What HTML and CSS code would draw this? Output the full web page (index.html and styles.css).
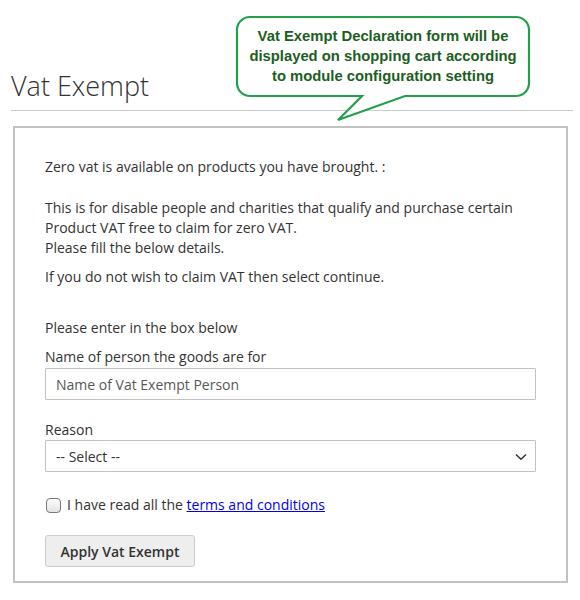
FILE: index.html
```html
<!DOCTYPE html>
<html lang="en">
<head>
<meta charset="utf-8">
<title>Vat Exempt</title>
<link rel="stylesheet" href="styles.css">
</head>
<body>
<div class="page">
  <h1 class="page-title">Vat Exempt</h1>

  <div class="callout">
    <svg class="callout-shape" width="310" height="120" viewBox="0 0 310 120" aria-hidden="true">
      <path d="M21,8 H287 A13,13 0 0 1 300,21 V74 A13,13 0 0 1 287,87 H176 L109,111 L133,87 H21 A13,13 0 0 1 8,74 V21 A13,13 0 0 1 21,8 Z" fill="#ffffff" stroke="#23a04c" stroke-width="2.2" stroke-linejoin="miter"/>
    </svg>
    <div class="callout-text">Vat Exempt Declaration form will be<br>displayed on shopping cart according<br>to module configuration setting</div>
  </div>

  <form class="vat-box">
    <p class="intro">Zero vat is available on products you have brought. :</p>
    <p class="details">This is for disable people and charities that qualify and purchase certain<br>Product VAT free to claim for zero VAT.<br>Please fill the below details.</p>
    <p class="note">If you do not wish to claim VAT then select continue.</p>
    <p class="enter">Please enter in the box below</p>

    <label class="field-label" for="person">Name of person the goods are for</label>
    <input class="text-input" id="person" type="text" placeholder="Name of Vat Exempt Person">

    <label class="field-label reason-label" for="reason">Reason</label>
    <div class="select-wrap">
      <select class="select-input" id="reason">
        <option>-- Select --</option>
      </select>
      <svg class="select-arrow" width="12" height="8" viewBox="0 0 12 8" aria-hidden="true">
        <path d="M1,1.5 L6,6.2 L11,1.5" fill="none" stroke="#333" stroke-width="1.5"/>
      </svg>
    </div>

    <div class="terms-row">
      <input class="checkbox" type="checkbox" id="terms">
      <label for="terms">I have read all the <a href="#" class="terms-link">terms and conditions</a></label>
    </div>

    <button type="button" class="apply-btn">Apply Vat Exempt</button>
  </form>
</div>
</body>
</html>
```

FILE: styles.css
```css
html, body {
  margin: 0;
  padding: 0;
  background: #ffffff;
}

body {
  font-family: "Open Sans", "Liberation Sans", sans-serif;
  font-size: 14px;
  line-height: 20px;
  color: #333333;
}

.page {
  position: relative;
  padding: 0 7px 0 11px;
}

.page-title {
  margin: 0;
  padding: 70px 0 8px 0;
  font-size: 27px;
  font-weight: 300;
  line-height: 32px;
  color: #333333;
  border-bottom: 1px solid #cccccc;
}

.callout {
  position: absolute;
  left: 229px;
  top: 9px;
  width: 310px;
  height: 120px;
}

.callout-shape {
  position: absolute;
  left: 0;
  top: 0;
  display: block;
}

.callout-text {
  position: absolute;
  left: 8px;
  top: 8px;
  width: 292px;
  padding-top: 9px;
  text-align: center;
  font-family: "Liberation Sans", Arial, sans-serif;
  font-weight: bold;
  font-size: 14.8px;
  line-height: 20px;
  color: #1c5e22;
}

.vat-box {
  margin: 15px 5px 0 2px;
  border: 2px solid #c2c2c2;
  padding: 29px 30px 14px 30px;
}

.vat-box p {
  margin: 0;
}

.vat-box .intro { margin-bottom: 21px; }
.vat-box .details { margin-bottom: 9px; }
.vat-box .note { margin-bottom: 31px; }
.vat-box .enter { margin-bottom: 9px; }

.field-label {
  display: block;
  margin-bottom: 1px;
}

.reason-label {
  margin-bottom: 0;
}

.text-input,
.select-input {
  display: block;
  box-sizing: border-box;
  width: 100%;
  height: 32px;
  margin: 0;
  padding: 0 10px;
  border: 1px solid #c2c2c2;
  border-radius: 1px;
  background: #ffffff;
  font-family: "Open Sans", "Liberation Sans", sans-serif;
  font-size: 14px;
  color: #333333;
  outline: none;
}

.text-input {
  margin-bottom: 20px;
}

.text-input::placeholder {
  color: #575757;
  opacity: 1;
}

.select-wrap {
  position: relative;
  margin-bottom: 23px;
}

.select-input {
  appearance: none;
  -webkit-appearance: none;
  padding-right: 30px;
}

.select-arrow {
  position: absolute;
  right: 9px;
  top: 13px;
  pointer-events: none;
}

.terms-row {
  display: flex;
  align-items: center;
  height: 20px;
  margin-bottom: 20px;
}

.checkbox {
  appearance: none;
  -webkit-appearance: none;
  box-sizing: border-box;
  width: 15px;
  height: 15px;
  margin: 0 6px 0 1px;
  border: 1px solid #7a7a7a;
  border-radius: 4px;
  background: linear-gradient(#fdfdfd, #e3e3e3);
}

.terms-link {
  color: #0000ee;
  text-decoration: underline;
}

.apply-btn {
  display: block;
  box-sizing: border-box;
  width: 150px;
  height: 32px;
  margin: 0;
  padding: 0;
  border: 1px solid #cdcdcd;
  border-radius: 3px;
  background: #eeeeee;
  font-family: "Open Sans", "Liberation Sans", sans-serif;
  font-size: 14px;
  font-weight: 600;
  color: #333333;
}
```
